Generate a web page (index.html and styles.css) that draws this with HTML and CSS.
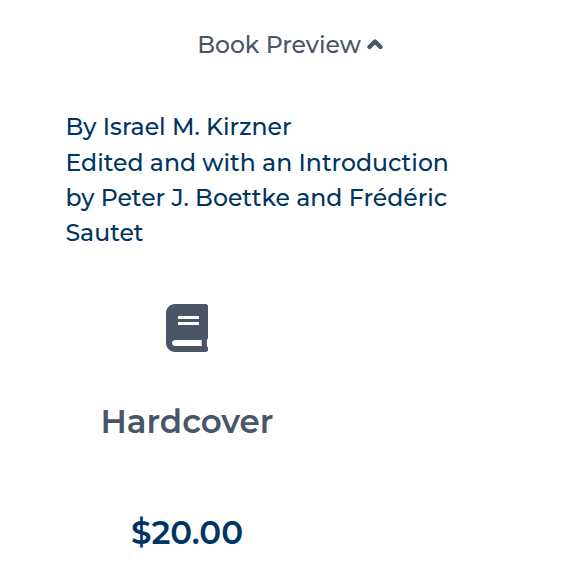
FILE: index.html
```
<!DOCTYPE html>
<html lang="en">
<head>
    <meta charset="UTF-8">
    <meta name="viewport" content="width=device-width, initial-scale=1.0">
    <title>Book Preview</title>
    <link rel="stylesheet" href="styles.css">
</head>
<body>

<a class="preview-toggle">
    <span>Book Preview</span>
    <svg class="chevron" viewBox="0 0 16 12">
        <path d="M2.5 9 L8 3.5 L13.5 9"/>
    </svg>
</a>

<div class="authors">
    By Israel M. Kirzner<br>
    Edited and with an Introduction by Peter J. Boettke and Frédéric Sautet
</div>

<div class="format">
    <svg class="book" viewBox="0 0 448 512">
        <path d="M448 360V24c0-13.3-10.7-24-24-24H96C43 0 0 43 0 96v320c0 53 43 96 96 96h328c13.3 0 24-10.7 24-24v-16c0-7.5-3.5-14.3-8.9-18.7-4.2-15.4-4.2-59.3 0-74.7 5.4-4.3 8.9-11.1 8.9-18.6zM128 134c0-3.3 2.7-6 6-6h212c3.3 0 6 2.7 6 6v20c0 3.3-2.7 6-6 6H134c-3.3 0-6-2.7-6-6v-20zm0 64c0-3.3 2.7-6 6-6h212c3.3 0 6 2.7 6 6v20c0 3.3-2.7 6-6 6H134c-3.3 0-6-2.7-6-6v-20zm253.4 250H96c-17.7 0-32-14.3-32-32 0-17.6 14.4-32 32-32h285.4c-1.9 17.1-1.9 46.9 0 64z"/>
    </svg>
    <h2 class="format-name">Hardcover</h2>
    <p class="price">$20.00</p>
</div>

</body>
</html>
```
FILE: styles.css
```
body {
    margin: 0;
    background-color: #fff;
    font-family: Montserrat, Inter, "Liberation Sans", sans-serif;
    font-size: 23.55px;
    font-weight: 500;
    color: #4a5568;
}

.preview-toggle {
    display: flex;
    justify-content: center;
    align-items: center;
    gap: 6px;
    height: 36px;
    padding-top: 26px;
}

.chevron {
    width: 16px;
    height: 12px;
    fill: none;
    stroke: #4a5568;
    stroke-width: 4.4;
    stroke-linejoin: round;
    stroke-linecap: round;
}

.authors {
    width: 400px;
    margin: 47.4px 0 0 65.5px;
    line-height: 35.3px;
    color: #003462;
}

.format {
    width: 242px;
    margin: 53.8px 0 0 66px;
    text-align: center;
}

.book {
    display: block;
    width: 42px;
    height: 48px;
    margin: 0 auto;
    fill: #4a5568;
}

.format-name {
    margin: 48px 0 0;
    font-size: 32.5px;
    font-weight: 600;
    line-height: 44px;
}

.price {
    margin: 67px 0 0;
    font-size: 32.5px;
    font-weight: 600;
    line-height: 44px;
    color: #003462;
}
```
